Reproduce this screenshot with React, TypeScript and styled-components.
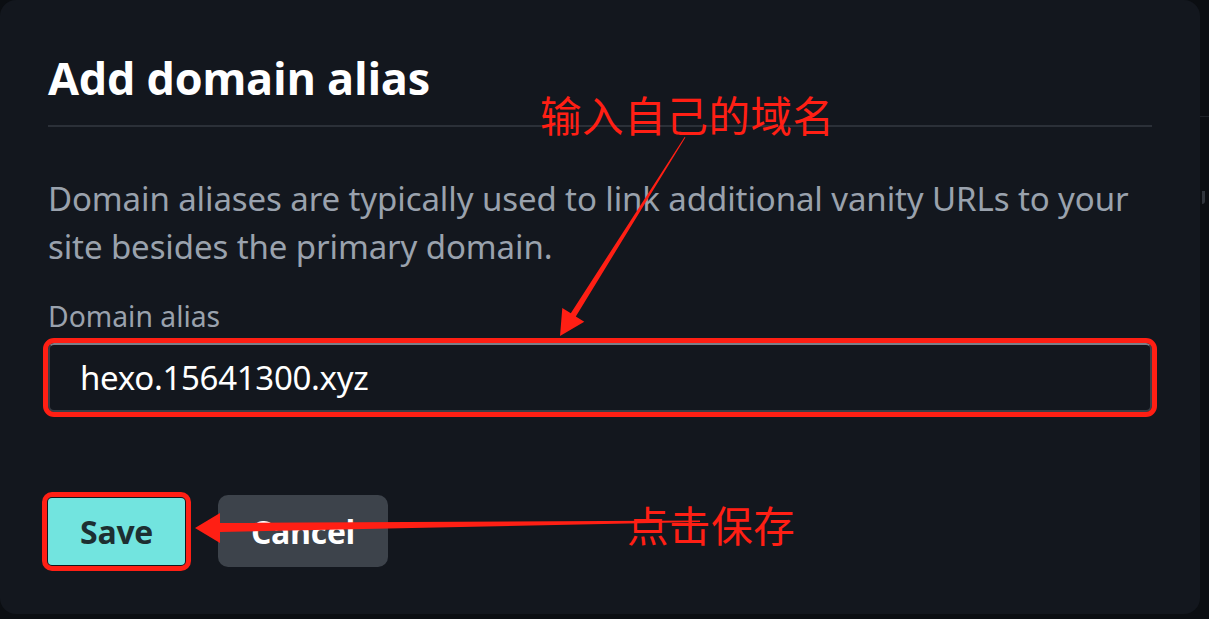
import React from "react";
import styled, { createGlobalStyle } from "styled-components";

const Global = createGlobalStyle`
  html, body { margin: 0; padding: 0; background: #0b0e12; }
  body { width: 1209px; height: 619px; overflow: hidden; font-family: "Noto Sans", "Open Sans", sans-serif; }
`;

const Stage = styled.div`
  position: relative;
  display: flex;
  width: 1209px;
  height: 619px;
`;

const Dialog = styled.section`
  width: 1200px;
  height: 614px;
  box-sizing: border-box;
  background: #13171e;
  border-radius: 16px;
  padding: 50px 48px 0 48px;
  display: flex;
  flex-direction: column;
`;

const Backdrop = styled.div`
  flex: 1;
  overflow: hidden;
  padding-top: 116px;
  display: flex;
  flex-direction: column;
`;

const BackLine = styled.div`
  height: 1px;
  background: #1d2127;
  width: 40px;
`;

const BackGlyph = styled.div`
  margin-top: 74px;
  margin-left: 2px;
  width: 3px;
  height: 13px;
  border-radius: 0 0 3px 0;
  background: #30353c;
`;

const Title = styled.h1`
  margin: 0;
  font-family: "Open Sans", "Noto Sans", sans-serif;
  font-weight: 700;
  font-size: 45px;
  line-height: 56px;
  color: #ffffff;
  letter-spacing: -0.3px;
`;

const Divider = styled.hr`
  margin: 19px 0 0 0;
  border: 0;
  height: 2px;
  background: #2b3038;
`;

const Description = styled.p`
  margin: 48px 0 0 0;
  font-size: 33px;
  line-height: 48px;
  color: #9aa2ad;
  letter-spacing: -0.1px;
`;

const Label = styled.label`
  margin-top: 28px;
  font-size: 28.3px;
  line-height: 34px;
  color: #9aa2ad;
`;

const Input = styled.div`
  margin-top: 10px;
  height: 69px;
  box-sizing: border-box;
  border: 2px solid #3a3f47;
  border-top-color: #7b8089;
  border-radius: 6px;
  display: flex;
  align-items: center;
  padding-left: 30px;
  font-size: 33px;
  color: #ffffff;
  outline: 5px solid #ff1f14;
  outline-offset: 0px;
  letter-spacing: -0.3px;
`;

const Actions = styled.div`
  margin-top: 83px;
  display: flex;
  gap: 33px;
  align-items: center;
`;

const Button = styled.button<{ $primary?: boolean }>`
  height: ${(p) => (p.$primary ? "67px" : "72px")};
  padding: 0;
  width: ${(p) => (p.$primary ? "137px" : "170px")};
  border: 0;
  border-radius: ${(p) => (p.$primary ? "4px" : "10px")};
  font-family: "Open Sans", "Noto Sans", sans-serif;
  font-weight: 700;
  font-size: 32px;
  letter-spacing: -0.3px;
  background: ${(p) => (p.$primary ? "#72e4df" : "#3d434b")};
  color: ${(p) => (p.$primary ? "#1d2f31" : "#ffffff")};
  outline: ${(p) => (p.$primary ? "5px solid #ff1f14" : "none")};
  outline-offset: 1px;
`;

const Note = styled.div<{ $x: number; $y: number }>`
  position: absolute;
  left: ${(p) => p.$x}px;
  top: ${(p) => p.$y}px;
  color: #ff1f14;
  font-family: "Noto Sans CJK SC", sans-serif;
  font-size: 41.5px;
  line-height: 48px;
  letter-spacing: 0.6px;
  white-space: nowrap;
`;

const Overlay = styled.svg`
  position: absolute;
  left: 0;
  top: 0;
  width: 1209px;
  height: 619px;
  pointer-events: none;
`;

export default function App() {
  return (
    <>
      <Global />
      <Stage>
        <Dialog>
          <Title>Add domain alias</Title>
          <Divider />
          <Description>
            Domain aliases are typically used to link additional vanity URLs to your site besides the primary domain.
          </Description>
          <Label>Domain alias</Label>
          <Input>hexo.15641300.xyz</Input>
          <Actions>
            <Button $primary>Save</Button>
            <Button>Cancel</Button>
          </Actions>
        </Dialog>
        <Backdrop>
          <BackLine />
          <BackGlyph />
        </Backdrop>
        <Note $x={540} $y={90}>输入自己的域名</Note>
        <Note $x={627} $y={500}>点击保存</Note>
        <Overlay viewBox="0 0 1209 619">
          <polygon
            fill="#ff1f14"
            points="560,336 562.3,307.9 570.8,313.2 684.6,137 685.4,137.5 575.8,316.4 584.3,321.7"
          />
          <polygon
            fill="#ff1f14"
            points="195,528 220,513 220,523 700,520.5 700,522 220,532 220,543"
          />
        </Overlay>
      </Stage>
    </>
  );
}
